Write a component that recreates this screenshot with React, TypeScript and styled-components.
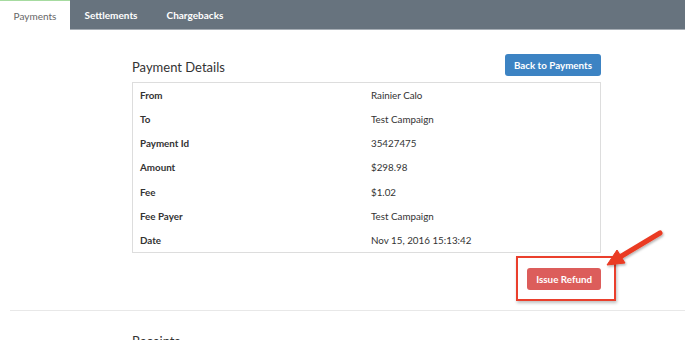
import React from 'react'
import styled, { createGlobalStyle } from 'styled-components'

const GlobalStyle = createGlobalStyle`
  html, body {
    margin: 0;
    padding: 0;
    background: #fff;
    font-family: Lato, "Open Sans", Arial, sans-serif;
    color: #333;
    overflow: hidden;
  }
`

const TabBar = styled.div`
  display: flex;
  height: 29px;
  background: #67737e;
  border-bottom: 1px solid #a7aeb5;
`
const Tab = styled.div<{ active?: boolean }>`
  display: flex;
  align-items: center;
  justify-content: center;
  padding: 0 14.5px;
  width: ${({ active }) => (active ? '70px' : 'auto')};
  box-sizing: border-box;
  font-size: 10px;
  font-weight: ${({ active }) => (active ? 400 : 700)};
  color: ${({ active }) => (active ? '#666' : '#fff')};
  background: ${({ active }) => (active ? '#fff' : 'transparent')};
  border-top: 1px solid ${({ active }) => (active ? '#a6dba0' : 'transparent')};
  margin-bottom: ${({ active }) => (active ? '-1px' : '0')};
`

const Panel = styled.div`
  width: 469px;
  margin-left: 132px;
  padding-top: 24px;
`
const PanelHeader = styled.div`
  display: flex;
  justify-content: space-between;
  align-items: flex-end;
  margin-bottom: 6px;
`
const Title = styled.h3`
  margin: 0 0 1px;
  font-size: 13px;
  font-weight: 400;
  color: #333;
`
const Button = styled.button<{ tone: 'blue' | 'red' }>`
  height: 22px;
  padding: 0 9px;
  border: none;
  border-radius: 3px;
  font-family: inherit;
  font-size: 9.8px;
  font-weight: 700;
  color: #fff;
  background: ${({ tone }) => (tone === 'blue' ? '#3c83c3' : '#dc5d5b')};
`

const DetailsTable = styled.div`
  border: 1px solid #ddd;
`
const Row = styled.div`
  display: grid;
  grid-template-columns: 231px 1fr;
  height: 24.14px;
  align-items: center;
  padding-left: 7px;
  font-size: 9.8px;
  color: #333;
`
const Label = styled.span`
  font-weight: 700;
`
const Value = styled.span``

const Actions = styled.div`
  display: flex;
  justify-content: flex-end;
  padding-top: 14px;
`
const RefundWrap = styled.div`
  position: relative;
`
const Annotation = styled.div`
  position: absolute;
  left: -11px;
  top: -11px;
  width: 100px;
  height: 45px;
  box-sizing: border-box;
  border: 2px solid #ea3f2c;
  box-shadow: 1px 2px 3px rgba(0, 0, 0, 0.25);
`
const Arrow = styled.svg`
  position: absolute;
  left: 73px;
  top: -42px;
  overflow: visible;
`

const Divider = styled.hr`
  margin: 20px 0 0 10px;
  border: none;
  border-top: 1px solid #e8e8e8;
`
const NextTitle = styled.h3`
  margin: 22px 0 0 132px;
  font-size: 13px;
  font-weight: 400;
  color: #333;
`

const details: [string, string][] = [
  ['From', 'Rainier Calo'],
  ['To', 'Test Campaign'],
  ['Payment Id', '35427475'],
  ['Amount', '$298.98'],
  ['Fee', '$1.02'],
  ['Fee Payer', 'Test Campaign'],
  ['Date', 'Nov 15, 2016 15:13:42'],
]

export default function App() {
  return (
    <>
      <GlobalStyle />
      <TabBar>
        <Tab active>Payments</Tab>
        <Tab>Settlements</Tab>
        <Tab>Chargebacks</Tab>
      </TabBar>
      <Panel>
        <PanelHeader>
          <Title>Payment Details</Title>
          <Button tone="blue">Back to Payments</Button>
        </PanelHeader>
        <DetailsTable>
          {details.map(([label, value]) => (
            <Row key={label}>
              <Label>{label}</Label>
              <Value>{value}</Value>
            </Row>
          ))}
        </DetailsTable>
        <Actions>
          <RefundWrap>
            <Button tone="red">Issue Refund</Button>
            <Annotation />
            <Arrow width="70" height="50" viewBox="0 0 70 50">
              <defs>
                <filter id="sh" x="-20%" y="-20%" width="150%" height="150%">
                  <feDropShadow dx="1" dy="1.5" stdDeviation="1" floodColor="#000" floodOpacity="0.3" />
                </filter>
              </defs>
              <g filter="url(#sh)" fill="#ea3a22" stroke="#ea3a22">
                <line x1="60" y1="8" x2="20" y2="32" strokeWidth="5" strokeLinecap="round" />
                <polygon points="7,40 25,38 17,25" strokeWidth="1" strokeLinejoin="round" />
              </g>
            </Arrow>
          </RefundWrap>
        </Actions>
      </Panel>
      <Divider />
      <NextTitle>Receipts</NextTitle>
    </>
  )
}
